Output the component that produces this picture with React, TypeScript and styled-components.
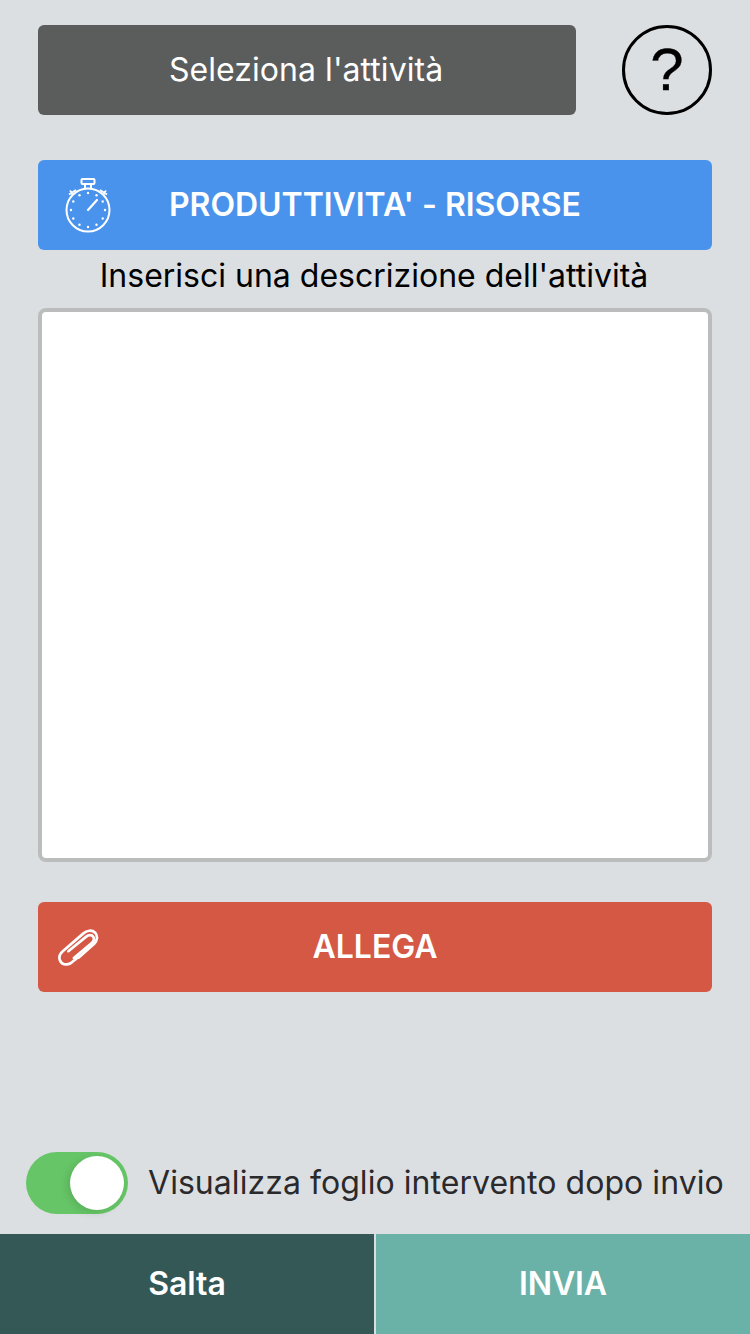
import React from "react";
import styled, { createGlobalStyle } from "styled-components";

const Global = createGlobalStyle`
  html, body { margin: 0; padding: 0; background: #dcdfe2; }
  * { box-sizing: border-box; }
`;

const Page = styled.div`
  width: 750px;
  height: 1334px;
  display: flex;
  flex-direction: column;
  background: #dcdfe2;
  font-family: Inter, "Liberation Sans", sans-serif;
  overflow: hidden;
`;

const Content = styled.div`
  flex: 1;
  display: flex;
  flex-direction: column;
  padding: 25px 38px 0;
`;

const TopRow = styled.div`
  display: flex;
  justify-content: space-between;
  height: 90px;
  margin-bottom: 45px;
`;

const SelectButton = styled.div`
  width: 538px;
  height: 90px;
  border-radius: 6px;
  background: #5b5d5c;
  color: #fff;
  font-size: 32px;
  letter-spacing: 0.05px;
  padding: 0 0 2px 131px;
  display: flex;
  align-items: center;
`;

const HelpButton = styled.div`
  width: 90px;
  height: 90px;
  border-radius: 50%;
  border: 3.5px solid #000;
  display: flex;
  align-items: center;
  justify-content: center;
  color: #000;
  font-family: "Liberation Sans", Arial, sans-serif;
  font-size: 60px;
  line-height: 1;
  -webkit-text-stroke: 0.3px #000;
`;

const ActionBar = styled.div<{ $bg: string }>`
  position: relative;
  height: 90px;
  border-radius: 6px;
  background: ${(p) => p.$bg};
  color: #fff;
  font-size: 32px;
  font-weight: 600;
  padding-bottom: 2px;
  display: flex;
  align-items: center;
`;

const CategoryLabel = styled.span`
  padding-left: 131px;
  letter-spacing: -0.04px;
`;

const CenterLabel = styled.span`
  width: 100%;
  text-align: center;
  letter-spacing: 0;
`;

const BarIcon = styled.svg`
  position: absolute;
  display: block;
`;

const Caption = styled.div`
  height: 58px;
  padding: 7px 2px 0 0;
  text-align: center;
  color: #000;
  font-size: 32px;
  line-height: 38px;
`;

const DescriptionBox = styled.div`
  height: 554px;
  border: 4px solid #bbbcbc;
  border-radius: 8px;
  background: #fff;
  margin-bottom: 40px;
`;

const ToggleRow = styled.div`
  display: flex;
  align-items: center;
  height: 62px;
  padding-left: 26px;
  margin-bottom: 20px;
  gap: 20px;
`;

const Track = styled.div`
  width: 102px;
  height: 62px;
  border-radius: 31px;
  background: #66c667;
  padding: 4px;
  display: flex;
  justify-content: flex-end;
`;

const Thumb = styled.div`
  width: 54px;
  height: 54px;
  border-radius: 50%;
  background: #fff;
  box-shadow: -3px 2px 8px rgba(0, 0, 0, 0.12);
`;

const ToggleLabel = styled.span`
  font-size: 32px;
  color: #2a2a2c;
  letter-spacing: 0.05px;
  white-space: nowrap;
  padding-bottom: 2px;
`;

const BottomBar = styled.div`
  height: 100px;
  display: flex;
  background: #dcdfe2;
  gap: 2px;
`;

const BottomButton = styled.div<{ $bg: string; $w: number }>`
  width: ${(p) => p.$w}px;
  background: ${(p) => p.$bg};
  color: #fff;
  font-size: 32px;
  font-weight: 600;
  letter-spacing: -0.1px;
  padding-bottom: 1px;
  display: flex;
  align-items: center;
  justify-content: center;
`;

const Stopwatch = () => (
  <BarIcon width="48" height="58" viewBox="0 0 48 58" fill="none" stroke="#fff" strokeWidth="2" style={{ left: 26, top: 16 }}>
    <rect x="17.500" y="3" width="13" height="5" rx="1" />
    <path d="M21 8v4.500M27 8v4.500" />
    <circle cx="24" cy="34" r="21.500" />
    <path d="M5 18.500l7 -4.500M6 14.500l2.500 3.500M43 18.500l-7 -4.500M42 14.500l-2.500 3.500" strokeWidth="1.800" />
    <path d="M24 34l9 -10" strokeWidth="2.200" strokeLinecap="round" />
    <g stroke="none" fill="#fff">
      {Array.from({ length: 12 }).map((_, i) => {
        const a = (i * Math.PI) / 6;
        return <circle key={i} cx={24 + 17 * Math.sin(a)} cy={34 - 17 * Math.cos(a)} r="1.200" />;
      })}
    </g>
  </BarIcon>
);

const Paperclip = () => (
  <BarIcon width="41" height="37" viewBox="0 0 44 40" fill="none" stroke="#fff" strokeWidth="2.900" strokeLinecap="round" strokeLinejoin="round" style={{ left: 20, top: 27 }}>
    <path d="M21 31 L13.500 37 C9 39.500 3.500 38.500 1.800 33.500 C0.500 29.500 2 26.500 5 24 L27 5 C31 1.500 36.500 0.500 40 4 C43 7.500 42.500 12.500 39 16 L22 31" />
    <path d="M11 24 L30 8.500 C33 6 36.500 6 38 8.500 C39.500 11 38.500 13.500 36 15.500 L17 31.500" />
  </BarIcon>
);

export default function App() {
  return (
    <Page>
      <Global />
      <Content>
        <TopRow>
          <SelectButton>Seleziona l'attività</SelectButton>
          <HelpButton>?</HelpButton>
        </TopRow>
        <ActionBar $bg="#4a93ec">
          <Stopwatch />
          <CategoryLabel>PRODUTTIVITA' - RISORSE</CategoryLabel>
        </ActionBar>
        <Caption>Inserisci una descrizione dell'attività</Caption>
        <DescriptionBox />
        <ActionBar $bg="#d55845">
          <Paperclip />
          <CenterLabel>ALLEGA</CenterLabel>
        </ActionBar>
      </Content>
      <ToggleRow>
        <Track>
          <Thumb />
        </Track>
        <ToggleLabel>Visualizza foglio intervento dopo invio</ToggleLabel>
      </ToggleRow>
      <BottomBar>
        <BottomButton $bg="#335856" $w={374}>Salta</BottomButton>
        <BottomButton $bg="#6ab2a8" $w={374}>INVIA</BottomButton>
      </BottomBar>
    </Page>
  );
}
